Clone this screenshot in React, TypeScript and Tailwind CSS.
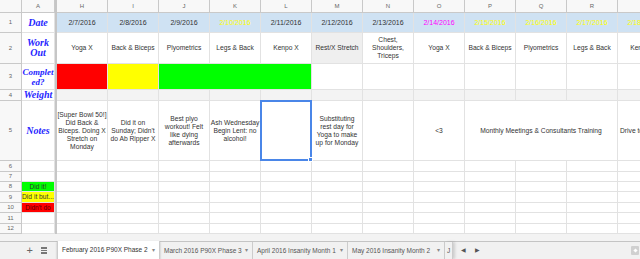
import React from "react";

const base =
  "border-r border-b border-[#e2e2e2] overflow-hidden flex items-center justify-center text-center text-[6.7px] leading-[8px] text-[#333] whitespace-nowrap";
const hdr =
  "border-r border-b border-[#c9c9c9] bg-[#f8f8f8] flex items-center justify-center text-[6px] text-[#666]";
const label =
  "font-['Liberation_Serif',serif] italic font-bold text-[#1f1fff] text-[10px] leading-[10px]";

function C({ cls = "", children }: { cls?: string; children?: React.ReactNode }) {
  return <div className={base + " " + cls}>{children}</div>;
}
function H({ cls = "", children }: { cls?: string; children?: React.ReactNode }) {
  return <div className={hdr + " " + cls}>{children}</div>;
}
function Lines({ l }: { l: string[] }) {
  return (
    <div className="flex flex-col items-center">
      {l.map((s, i) => (
        <span key={i}>{s}</span>
      ))}
    </div>
  );
}

const dateCls = "bg-[#cfe2f3] border-[#d6dde4] text-[7px]";
const tab =
  "border-r border-[#cccccc] flex items-center justify-between pl-[4px] pr-[4px] whitespace-nowrap overflow-hidden";

export default function App() {
  const cols = ["H", "I", "J", "K", "L", "M", "N", "O", "P", "Q", "R", "S"];
  const empty12 = Array.from({ length: 12 });
  return (
    <div className="w-[640px] h-[259px] overflow-hidden bg-white flex flex-col font-['Liberation_Sans',sans-serif]">
      <div className="grid w-[669px] h-[234px] shrink-0 grid-cols-[22px_33px_2px_repeat(12,51px)] grid-rows-[13px_20px_31px_26px_11px_60px_11px_10px_10px_11px_10px_11px_10px]">
        <div className="col-start-3 row-start-1 row-span-13 bg-[#c6c6c6]" />
        {/* header row */}
        <H />
        <H>A</H>
        {cols.map((c) => (
          <H key={c} cls={c === "L" ? "bg-[#dcdcdc]" : ""}>
            {c}
          </H>
        ))}
        {/* row 1 */}
        <H>1</H>
        <C>
          <span className={label}>Date</span>
        </C>
        <C cls={dateCls}>2/7/2016</C>
        <C cls={dateCls}>2/8/2016</C>
        <C cls={dateCls}>2/9/2016</C>
        <C cls={dateCls + " text-[#ffff00]"}>2/10/2016</C>
        <C cls={dateCls}>2/11/2016</C>
        <C cls={dateCls}>2/12/2016</C>
        <C cls={dateCls}>2/13/2016</C>
        <C cls={dateCls + " text-[#ff00ff]"}>2/14/2016</C>
        <C cls={dateCls + " text-[#ffff00]"}>2/15/2016</C>
        <C cls={dateCls + " text-[#ffff00]"}>2/16/2016</C>
        <C cls={dateCls + " text-[#ffff00]"}>2/17/2016</C>
        <C cls={dateCls + " text-[#ffff00]"}>2/18/2016</C>
        {/* row 2 */}
        <H>2</H>
        <C>
          <div className={label + " flex flex-col items-center"}>
            <span>Work</span>
            <span>Out</span>
          </div>
        </C>
        <C>Yoga X</C>
        <C>Back &amp; Biceps</C>
        <C>Plyometrics</C>
        <C>Legs &amp; Back</C>
        <C>Kenpo X</C>
        <C cls="bg-[#efefef]">Rest/X Stretch</C>
        <C>
          <Lines l={["Chest,", "Shoulders,", "Triceps"]} />
        </C>
        <C>Yoga X</C>
        <C>Back &amp; Biceps</C>
        <C>Plyometrics</C>
        <C>Legs &amp; Back</C>
        <C>Kenpo X</C>
        {/* row 3 */}
        <H>3</H>
        <C>
          <div className="font-['Liberation_Serif',serif] italic font-bold text-[#1f1fff] text-[9px] leading-[10px] flex flex-col items-center">
            <span>Complet</span>
            <span>ed?</span>
          </div>
        </C>
        <C cls="bg-[#ff0000] border-[#e6e6e6]" />
        <C cls="bg-[#ffff00]" />
        <C cls="bg-[#00ff00] border-r-0" />
        <C cls="bg-[#00ff00] border-r-0" />
        <C cls="bg-[#00ff00]" />
        <C />
        <C />
        <C />
        <C />
        <C />
        <C />
        <C />
        {/* row 4 */}
        <H>4</H>
        <C>
          <span className={label}>Weight</span>
        </C>
        {empty12.map((_, i) => (
          <C key={i} cls="bg-[#f3f3f3]" />
        ))}
        {/* row 5 */}
        <H cls="bg-[#dcdcdc]">5</H>
        <C>
          <span className={label}>Notes</span>
        </C>
        <C>
          <Lines l={["[Super Bowl 50!]", "Did Back &", "Biceps. Doing X", "Stretch on", "Monday"]} />
        </C>
        <C>
          <Lines l={["Did it on", "Sunday; Didn't", "do Ab Ripper X"]} />
        </C>
        <C>
          <Lines l={["Best plyo", "workout! Felt", "like dying", "afterwards"]} />
        </C>
        <C>
          <Lines l={["Ash Wednesday", "Begin Lent: no", "alcohol!"]} />
        </C>
        <div className="relative border-2 border-[#4a86e8] -ml-px -mt-px">
          <div className="absolute -right-[3px] -bottom-[3px] w-[5px] h-[5px] bg-[#4a86e8] border border-white" />
        </div>
        <C>
          <Lines l={["Substituting", "rest day for", "Yoga to make", "up for Monday"]} />
        </C>
        <C />
        <C>&lt;3</C>
        <C cls="col-span-3">Monthly Meetings &amp; Consultants Training</C>
        <C cls="justify-start pl-[2px]">Drive to see family</C>
        {/* rows 6-12 */}
        {[6, 7, 8, 9, 10, 11, 12].map((r) => (
          <React.Fragment key={r}>
            <H>{r}</H>
            {r === 8 ? (
              <C cls="bg-[#00ff00] text-[6.5px] text-[#222]">Did it!</C>
            ) : r === 9 ? (
              <C cls="bg-[#ffff00] text-[6.5px] text-[#222]">Did it but...</C>
            ) : r === 10 ? (
              <C cls="bg-[#ff0000]">
                <span className="text-[6.5px] text-[#5c0000]">Didn&apos;t do</span>
              </C>
            ) : (
              <C />
            )}
            {empty12.map((_, i) => (
              <C key={i} />
            ))}
          </React.Fragment>
        ))}
      </div>
      <div className="h-[7px] bg-[#f3f3f3] shrink-0" />
      <div className="h-[18px] shrink-0 flex items-stretch bg-[#f1f1f1] border-t border-[#c4c4c4] text-[6.5px] text-[#555]">
        <div className="w-[57px] shrink-0 flex items-center justify-end gap-[8px] pr-[10px] text-[#666]">
          <span className="text-[11px] leading-[11px]">+</span>
          <div className="flex flex-col gap-[1px]">
            <div className="w-[6px] h-[1.5px] bg-[#777]" />
            <div className="w-[6px] h-[1.5px] bg-[#777]" />
            <div className="w-[6px] h-[1.5px] bg-[#777]" />
          </div>
        </div>
        <div className={tab + " w-[103px] shrink-0 -mt-px bg-white border-l text-[#333] shadow-[0_1px_2px_rgba(0,0,0,0.25)]"}>
          <span>February 2016 P90X Phase 2</span>
          <span className="text-[6px] text-[#888]">▾</span>
        </div>
        <div className={tab + " w-[93px] shrink-0"}>
          <span>March 2016 P90X Phase 3</span>
          <span className="text-[6px] text-[#888]">▾</span>
        </div>
        <div className={tab + " w-[95px] shrink-0"}>
          <span>April 2016 Insanity Month 1</span>
          <span className="text-[6px] text-[#888]">▾</span>
        </div>
        <div className={tab + " w-[97px] shrink-0"}>
          <span>May 2016 Insanity Month 2</span>
          <span className="text-[6px] text-[#888]">▾</span>
        </div>
        <div className="w-[8px] shrink-0 border-r border-[#cccccc] flex items-center pl-[2px] overflow-hidden shadow-[2px_0_3px_rgba(0,0,0,0.15)]">
          <span>J</span>
        </div>
        <div className="flex items-center gap-[9px] pl-[8px] text-[#555] text-[6px]">
          <span>◀</span>
          <span>▶</span>
        </div>
        <div className="flex-1" />
        <div className="flex items-center pr-[1px]">
          <div className="w-[8px] h-[9px] bg-[#d0d0d0] rounded-[1px] flex items-center justify-center">
            <div className="w-[3px] h-[3px] bg-white rotate-45" />
          </div>
        </div>
      </div>
    </div>
  );
}
